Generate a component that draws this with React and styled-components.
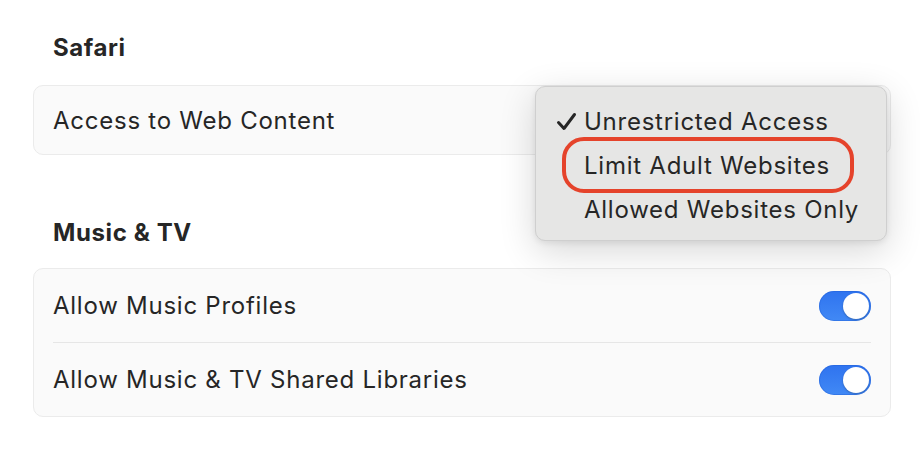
import React from "react";
import styled, { createGlobalStyle } from "styled-components";

const GlobalStyle = createGlobalStyle`
  html, body {
    margin: 0;
    padding: 0;
    background: #ffffff;
  }
  body {
    font-family: Inter, "Noto Sans", "Liberation Sans", sans-serif;
    color: #262626;
    -webkit-font-smoothing: antialiased;
  }
`;

const Page = styled.div`
  width: 920px;
  height: 458px;
  padding: 34px 29px 0 33px;
  box-sizing: border-box;
  display: flex;
  flex-direction: column;
  gap: 64px;
`;

const Section = styled.section`
  display: flex;
  flex-direction: column;
  gap: ${({ $gap }) => $gap}px;
`;

const Heading = styled.h2`
  margin: 0;
  padding-left: 20px;
  font-size: 24px;
  line-height: 28px;
  font-weight: 700;
  letter-spacing: 0.6px;
  color: #262626;
`;

const CardWrap = styled.div`
  position: relative;
`;

const Card = styled.div`
  background: #fafafa;
  border: 1px solid #ebebeb;
  border-radius: 10px;
  padding: 0 19px;
  display: flex;
  flex-direction: column;
`;

const Row = styled.div`
  height: ${({ $h }) => $h}px;
  display: flex;
  align-items: center;
  justify-content: space-between;
  font-size: 24px;
  letter-spacing: 0.75px;
  color: #262626;
  & + & {
    border-top: 1px solid #e6e6e6;
  }
`;

const Toggle = styled.div`
  width: 52px;
  height: 30px;
  border-radius: 15px;
  background: linear-gradient(180deg, #2f73ef 0%, #4189f5 100%);
  box-shadow: inset 0 0 0 1px rgba(30, 90, 210, 0.35);
  display: flex;
  align-items: center;
  justify-content: flex-end;
  padding: 0 2px;
  box-sizing: border-box;
`;

const Knob = styled.div`
  width: 26px;
  height: 26px;
  border-radius: 50%;
  background: #ffffff;
  box-shadow: 0 1px 2px rgba(0, 0, 0, 0.25);
`;

const Menu = styled.div`
  position: absolute;
  left: 502px;
  top: 1px;
  width: 352px;
  box-sizing: border-box;
  padding: 12px 0 9px;
  background: #e6e6e5;
  border: 1px solid #cfcfcf;
  border-radius: 10px;
  box-shadow: 0 10px 36px rgba(0, 0, 0, 0.16), 0 2px 6px rgba(0, 0, 0, 0.08);
  display: flex;
  flex-direction: column;
`;

const MenuItem = styled.div`
  position: relative;
  height: 44px;
  display: flex;
  align-items: center;
  padding-left: 48px;
  font-size: 24px;
  letter-spacing: 0.75px;
  color: #262626;
  white-space: nowrap;
`;

const Check = styled.svg`
  position: absolute;
  left: 20px;
  top: 13px;
`;

const Highlight = styled.div`
  position: absolute;
  left: 26px;
  top: -6px;
  width: 292px;
  height: 56px;
  box-sizing: border-box;
  border: 4px solid #e5432b;
  border-radius: 22px;
  pointer-events: none;
`;

const menuOptions = [
  { label: "Unrestricted Access", checked: true },
  { label: "Limit Adult Websites", marked: true },
  { label: "Allowed Websites Only" },
];

const App = () => {
  return (
    <>
      <GlobalStyle />
      <Page>
        <Section $gap={23}>
          <Heading>Safari</Heading>
          <CardWrap>
            <Card>
              <Row $h={68}>Access to Web Content</Row>
            </Card>
            <Menu>
              {menuOptions.map((opt) => (
                <MenuItem key={opt.label}>
                  {opt.checked && (
                    <Check width="21" height="19" viewBox="0 0 21 19">
                      <path
                        d="M2.5 10.5 L8 16.5 L18.5 2.5"
                        fill="none"
                        stroke="#262626"
                        strokeWidth="3"
                        strokeLinecap="round"
                        strokeLinejoin="round"
                      />
                    </Check>
                  )}
                  {opt.label}
                  {opt.marked && <Highlight />}
                </MenuItem>
              ))}
            </Menu>
          </CardWrap>
        </Section>
        <Section $gap={21}>
          <Heading>Music &amp; TV</Heading>
          <Card>
            <Row $h={73}>
              Allow Music Profiles
              <Toggle>
                <Knob />
              </Toggle>
            </Row>
            <Row $h={73}>
              Allow Music &amp; TV Shared Libraries
              <Toggle>
                <Knob />
              </Toggle>
            </Row>
          </Card>
        </Section>
      </Page>
    </>
  );
};

export default App;
